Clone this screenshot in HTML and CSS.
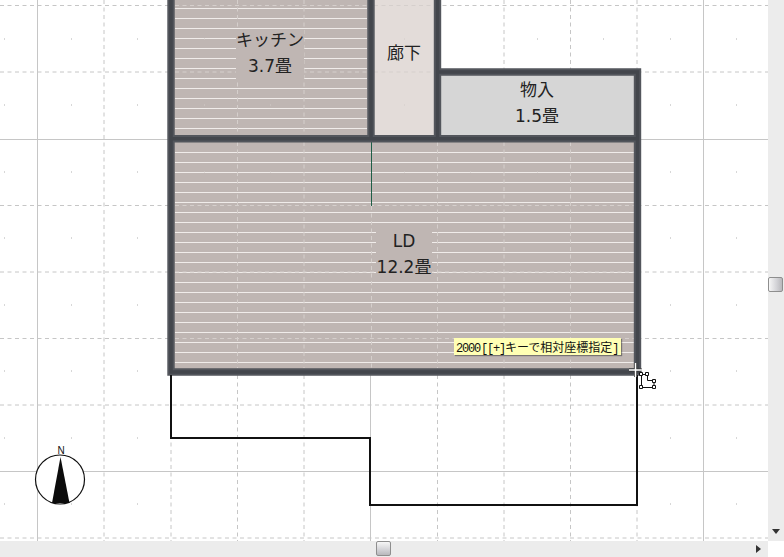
FILE: index.html
```html
<!DOCTYPE html>
<html lang="ja">
<head>
<meta charset="utf-8">
<title>間取り</title>
<link rel="stylesheet" href="styles.css">
</head>
<body>
<div class="app">
  <div class="main">
    <div class="canvas">
      <svg class="plan" width="768" height="541" viewBox="0 0 768 541" xmlns="http://www.w3.org/2000/svg">
        <path class="grid-dash" d="M104 0V541M171 0V541M237.500 0V541M304 0V541M437.500 0V541M504 0V541M570.500 0V541M637 0V541M0 5.500H768M0 72H768M0 205.500H768M0 272H768M0 338.500H768M0 405H768M0 538H768"/>
        <path class="grid-solid" d="M37.500 0V541M370.500 0V541M703.500 0V541M0 139.500H768M0 471.500H768"/>
        <path class="grid-dot" d="M4 39h1M71 39h1M137 39h1M204 39h1M404 39h1M537 39h1M603 39h1M670 39h1M736 39h1M4 105h1M71 105h1M137 105h1M537 105h1M603 105h1M670 105h1M736 105h1M4 172h1M71 172h1M137 172h1M670 172h1M736 172h1M4 238h1M71 238h1M137 238h1M670 238h1M736 238h1M4 305h1M71 305h1M137 305h1M670 305h1M736 305h1M4 371h1M71 371h1M137 371h1M670 371h1M736 371h1M4 438h1M71 438h1M137 438h1M204 438h1M270 438h1M670 438h1M736 438h1M4 504h1M71 504h1M137 504h1M670 504h1M736 504h1"/>

        <rect class="floor" x="171" y="0" width="200" height="139"/>
        <rect class="floor" x="171" y="139" width="466" height="233"/>
        <rect class="hall" x="371" y="0" width="66" height="139"/>
        <rect class="closet" x="437" y="72" width="200" height="67"/>

        <path class="stripe" d="M175 8.500H367M175 18.500H367M175 28.500H367M175 38.500H367M175 48.500H367M175 58.500H367M175 68.500H367M175 78.500H367M175 88.500H367M175 98.500H367M175 108.500H367M175 118.500H367M175 128.500H367"/>
        <path class="stripe" d="M175 152.500H634M175 162.500H634M175 172.500H634M175 182.500H634M175 192.500H634M175 202.500H634M175 212.500H634M175 222.500H634M175 232.500H634M175 242.500H634M175 252.500H634M175 262.500H634M175 272.500H634M175 282.500H634M175 292.500H634M175 302.500H634M175 312.500H634M175 322.500H634M175 332.500H634M175 342.500H634M175 352.500H634M175 362.500H634"/>
        <path class="grid-over" d="M237.500 0V135M304 0V135M237.500 142V368M304 142V368M437.500 142V368M504 142V368M570.500 142V368M371.500 206V368M175 5.500H367M175 72H367M175 205.500H634M175 272H634M175 338.500H634M374 5.500H434M374 72H434"/>
        <path class="tick" d="M204 39h1M404 39h1M404 105h1M204 105h1M270 105h1M537 172h1M470 172h1M404 172h1M204 172h1M270 172h1"/>

        <rect class="floor" x="236" y="30" width="68" height="50"/>
        <rect class="floor" x="376" y="224" width="56" height="56"/>

        <path class="partition" d="M371.500 141V206"/>
        <path class="wall" d="M171 0V372H637.500V72H437.500M437.500 0V138.700M371 0V138.700M171 138.700H637.500"/>
        <path class="wall-core" d="M171 0V372H637.500V72H437.500M437.500 0V138.700M371 0V138.700M171 138.700H637.500"/>
        <path class="outline" d="M171 375V438H370V505H637V375"/>

        <g class="compass">
          <circle class="compass-ring" cx="60" cy="479.500" r="24.500"/>
          <path class="compass-needle" d="M60.500 457L69.500 503H52Z"/>
          <text class="compass-n" x="61" y="454" text-anchor="middle">N</text>
        </g>

        <path class="cursor-halo" d="M635.500 363V377M629 370H642"/>
        <path class="cursor-line" d="M635.500 363V377M629 370H642"/>
        <path class="cursor-shape" d="M641.500 374.500H647.500V380.500H654V387.500H641.500Z"/>
        <path class="cursor-nodes" d="M639.500 372.500h3v3h-3zM645.500 372.500h3v3h-3zM652.500 379.500h3v3h-3zM639.500 385.500h3v3h-3zM652.500 385.500h3v3h-3z"/>
      </svg>

      <div class="label label-kitchen">キッチン<br>3.7畳</div>
      <div class="label label-hall">廊下</div>
      <div class="label label-closet">物入<br>1.5畳</div>
      <div class="label label-ld">LD<br>12.2畳</div>
      <div class="tip"><span class="tip-latin">2000 [[+]</span>キーで相対座標指定<span class="tip-latin">]</span></div>
    </div>
    <div class="vbar">
      <div class="thumb thumb-v"></div>
      <svg class="arrow" width="9" height="6" viewBox="0 0 9 6"><path d="M0 0H8L4 5Z"/></svg>
    </div>
  </div>
  <div class="hbar">
    <div class="thumb thumb-h"></div>
    <svg class="arrow" width="6" height="9" viewBox="0 0 6 9"><path d="M0 0L5 4L0 8Z"/></svg>
  </div>
</div>
</body>
</html>
```
FILE: styles.css
```css
* { box-sizing: border-box; }
html, body { margin: 0; padding: 0; height: 100%; overflow: hidden; background: #fff; }
body { font-family: "DejaVu Sans", "Noto Sans CJK JP", sans-serif; color: #222; }

.app { display: flex; flex-direction: column; width: 784px; height: 557px; }
.main { display: flex; height: 541px; }
.canvas { position: relative; width: 768px; height: 541px; overflow: hidden; background: #fff; }
.plan { display: block; }

.grid-dash { fill: none; stroke: #c6c6c6; stroke-width: 1; stroke-dasharray: 4 3.500; }
.grid-solid { fill: none; stroke: #c6c6c6; stroke-width: 1; }
.grid-dot { fill: none; stroke: #b0b0b0; stroke-width: 1; }
.floor { fill: #bfb6b3; }
.hall { fill: #e3dcd9; }
.closet { fill: #d6d6d6; }
.stripe { fill: none; stroke: #f0ecea; stroke-width: 1; }
.grid-over { fill: none; stroke: #d5cfcc; stroke-width: 1; stroke-dasharray: 4 3.500; }
.tick { fill: none; stroke: #d2ccc9; stroke-width: 1; }
.partition { fill: none; stroke: #1f5f48; stroke-width: 1; }
.wall { fill: none; stroke: #53565c; stroke-width: 7.400; stroke-linejoin: miter; }
.wall-core { fill: none; stroke: #43464c; stroke-width: 3.500; }
.outline { fill: none; stroke: #111; stroke-width: 2; }

.compass-ring { fill: #fff; stroke: #111; stroke-width: 1.200; }
.compass-needle { fill: #0c0c0c; }
.compass-n { font-family: "Liberation Sans", sans-serif; font-size: 10px; font-weight: 400; fill: #111; }

.cursor-halo { fill: none; stroke: #333; stroke-width: 3; }
.cursor-line { fill: none; stroke: #fff; stroke-width: 1.500; }
.cursor-shape { fill: #fff; stroke: #111; stroke-width: 1; }
.cursor-nodes { fill: #fff; stroke: #111; stroke-width: 1; }

.label { position: absolute; text-align: center; font-size: 17px; line-height: 26px; color: #222; white-space: nowrap; }
.label-kitchen { left: 220px; top: 27px; width: 100px; }
.label-hall { left: 371px; top: 40px; width: 66px; }
.label-closet { left: 487px; top: 77px; width: 100px; }
.label-ld { left: 354px; top: 228px; width: 100px; }

.tip {
  position: absolute; left: 454px; top: 338px; width: 167px; height: 17px;
  background: #ffffb4; box-shadow: 1px 1px 1px rgba(60, 60, 60, .55);
  font-family: "Noto Sans CJK JP", sans-serif; font-size: 12px; line-height: 17px;
  color: #111; padding-left: 2px; white-space: nowrap; overflow: hidden;
}
.tip-latin { font-family: "Liberation Mono", monospace; font-size: 12px; letter-spacing: -1.2px; word-spacing: -5px; }

.vbar {
  position: relative; display: flex; flex-direction: column; align-items: center; justify-content: flex-end;
  width: 16px; height: 541px; background: #ececec; padding-bottom: 6px;
}
.hbar {
  position: relative; display: flex; align-items: center; justify-content: flex-end;
  width: 768px; height: 16px; background: #ececec; padding-right: 6px;
}
.thumb {
  position: absolute; width: 15px; height: 15px; border: 1px solid #8e8e8e; border-radius: 2px;
}
.thumb-v { left: 0; top: 277px; background: linear-gradient(90deg, #f6f6f6, #d2d2d6 60%, #b8b8bc); }
.thumb-h { left: 376px; top: 0; background: linear-gradient(180deg, #f6f6f6, #d2d2d6 60%, #b8b8bc); }
.arrow { display: block; fill: #333; }
```
